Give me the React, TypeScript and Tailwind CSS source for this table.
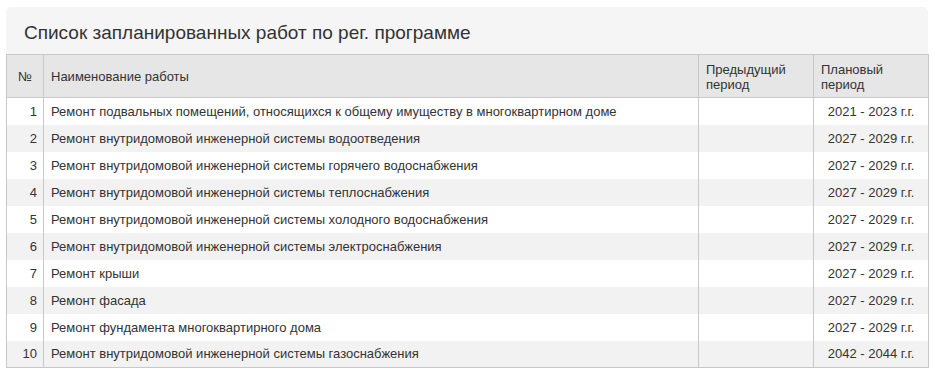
const works = [
  { n: 1, name: "Ремонт подвальных помещений, относящихся к общему имуществу в многоквартирном доме", plan: "2021 - 2023 г.г." },
  { n: 2, name: "Ремонт внутридомовой инженерной системы водоотведения", plan: "2027 - 2029 г.г." },
  { n: 3, name: "Ремонт внутридомовой инженерной системы горячего водоснабжения", plan: "2027 - 2029 г.г." },
  { n: 4, name: "Ремонт внутридомовой инженерной системы теплоснабжения", plan: "2027 - 2029 г.г." },
  { n: 5, name: "Ремонт внутридомовой инженерной системы холодного водоснабжения", plan: "2027 - 2029 г.г." },
  { n: 6, name: "Ремонт внутридомовой инженерной системы электроснабжения", plan: "2027 - 2029 г.г." },
  { n: 7, name: "Ремонт крыши", plan: "2027 - 2029 г.г." },
  { n: 8, name: "Ремонт фасада", plan: "2027 - 2029 г.г." },
  { n: 9, name: "Ремонт фундамента многоквартирного дома", plan: "2027 - 2029 г.г." },
  { n: 10, name: "Ремонт внутридомовой инженерной системы газоснабжения", plan: "2042 - 2044 г.г." },
];

const App = () => {
  return (
    <div className="w-[934px] h-[372px] bg-white pt-[7px] px-[6px] font-['Liberation_Sans',Arial,sans-serif] text-[#333]">
      <div className="w-[922px] bg-[#f5f5f5] rounded-t-[5px]">
        <h2 className="h-[47px] pl-[18px] pt-[14px] text-[19px] leading-[23px] text-[#333]">
          Список запланированных работ по рег. программе
        </h2>
        <table className="w-full border-collapse border border-[#c8c8c8] text-[13px] table-fixed">
          <colgroup>
            <col className="w-[37px]" />
            <col className="w-[655px]" />
            <col className="w-[115px]" />
            <col className="w-[115px]" />
          </colgroup>
          <thead>
            <tr className="bg-[#e6e6e6] h-[43px]">
              <th className="border border-[#c8c8c8] font-normal text-center align-middle leading-[15px] px-[6px]">№</th>
              <th className="border border-[#c8c8c8] font-normal text-left align-middle leading-[15px] px-[7px]">Наименование работы</th>
              <th className="border border-[#c8c8c8] font-normal text-left align-middle leading-[15px] px-[7px] pt-[1px]">Предыдущий<br />период</th>
              <th className="border border-[#c8c8c8] font-normal text-left align-middle leading-[15px] px-[7px] pt-[1px]">Плановый<br />период</th>
            </tr>
          </thead>
          <tbody>
            {works.map((w, i) => (
              <tr key={w.n} className={i % 2 === 0 ? "bg-white h-[27px]" : "bg-[#f2f2f2] h-[27px]"}>
                <td className="border-x border-[#c8c8c8] text-right pr-[6px] leading-[17px]">{w.n}</td>
                <td className="border-x border-[#c8c8c8] px-[7px] leading-[17px]">{w.name}</td>
                <td className="border-x border-[#c8c8c8]"></td>
                <td className="border-x border-[#c8c8c8] text-center leading-[17px]">{w.plan}</td>
              </tr>
            ))}
          </tbody>
        </table>
      </div>
    </div>
  );
};

export default App;
